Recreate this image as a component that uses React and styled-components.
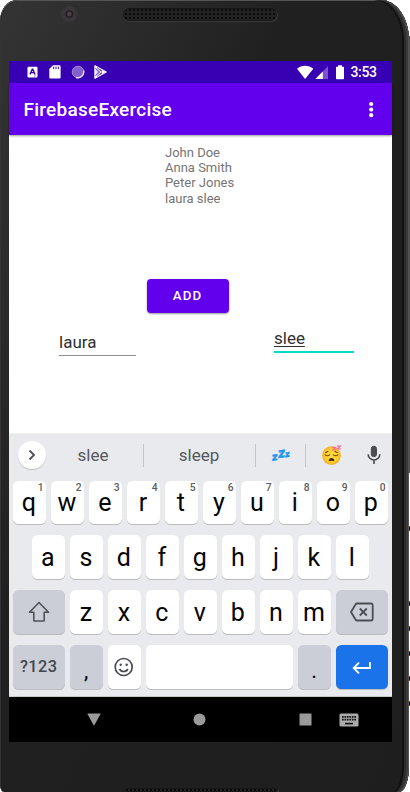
import React from "react";
import styled, { createGlobalStyle } from "styled-components";

const GlobalStyle = createGlobalStyle`
  * { box-sizing: border-box; }
  html, body { margin: 0; background: #fff; overflow: hidden; }
  svg { display: block; flex: none; }
`;

const Stage = styled.main`
  width: 410px;
  height: 792px;
  position: relative;
  overflow: hidden;
  background: #fff;
  font-family: Roboto, "Liberation Sans", sans-serif;
`;

const Phone = styled.div`
  width: 409px;
  height: 792px;
  padding: 0 17px 0 9px;
  display: flex;
  flex-direction: column;
  border-radius: 17px 28px 10px 4px / 21px 40px 26px 8px;
  background: linear-gradient(115deg, #343434 0%, #2b2b2b 18%, #202020 38%, #1e1e1e 100%);
  box-shadow: inset -1px 0 #555, inset -3px 0 #3a3a3a, inset -5px 0 #2c2c2c,
    inset -7px 0 #111, inset 0.5px 1px #555, inset 1px 1px #151515;
`;

const Bezel = styled.div`
  height: 61px;
  flex: none;
  display: flex;
  align-items: flex-start;
`;

const Camera = styled.div`
  width: 16px;
  height: 16px;
  margin: 6px 0 0 52px;
  border-radius: 50%;
  background: radial-gradient(circle at 52% 50%, #52434a 0 10%, #1f1b21 28%, #39363a 38%, #363536 100%);
`;

const Grille = styled.div`
  width: 154px;
  height: 13px;
  margin: 8px 0 0 46px;
  border-radius: 7px;
  background-color: #232323;
  background-image: radial-gradient(circle, #0b0b0b 0.8px, transparent 1.3px);
  background-size: 4px 4px;
  background-position: 1px 0;
  box-shadow: inset 0 0 0 1px #181818, 1px 1px 0 #393939;
`;

const BottomGrille = styled(Grille)`
  margin: 46px 0 0 115px;
`;

const Screen = styled.div`
  width: 383px;
  height: 681px;
  flex: none;
  display: flex;
  flex-direction: column;
  background: #fff;
`;

const StatusBar = styled.header`
  height: 22px;
  flex: none;
  display: flex;
  align-items: center;
  justify-content: space-between;
  padding: 0 15px 0 18px;
  background: #3700b3;
  color: #fff;
`;

const StatusGroup = styled.div`
  display: flex;
  align-items: center;
`;

const Clock = styled.span`
  width: 26.5px;
  font-size: 14px;
  line-height: 22px;
  font-weight: 500;
  letter-spacing: -0.35px;
  white-space: nowrap;
`;

const AppBar = styled.div`
  height: 52px;
  flex: none;
  display: flex;
  align-items: center;
  justify-content: space-between;
  padding: 1px 18px 0 14.5px;
  background: #6200ee;
  color: #fff;
  box-shadow: 0 1px 2px rgba(0, 0, 0, 0.4);
  z-index: 1;
`;

const Title = styled.h1`
  margin: 0;
  font-size: 19px;
  font-weight: 500;
  letter-spacing: 0.25px;
`;

const Content = styled.section`
  height: 298px;
  flex: none;
  display: flex;
  flex-direction: column;
`;

const Names = styled.ul`
  list-style: none;
  margin: 10px 0 0 156px;
  padding: 0;
  height: 133.5px;
  color: #757575;
  font-size: 13px;
  line-height: 15.2px;
`;

const AddButton = styled.button`
  width: 82px;
  height: 34px;
  margin: 0 0 0 137.5px;
  padding: 0;
  border: 0;
  border-radius: 4px;
  background: #6200ee;
  color: #fff;
  font: 500 13.3px Roboto, sans-serif;
  letter-spacing: 1.1px;
  box-shadow: 0 1px 2px rgba(0, 0, 0, 0.4);
`;

const Fields = styled.div`
  display: flex;
  justify-content: space-between;
  align-items: flex-start;
  padding: 0 38px 0 50px;
`;

const Field = styled.div`
  width: ${(p) => (p.$active ? "80px" : "77px")};
  height: ${(p) => (p.$active ? "24.5px" : "24px")};
  margin-top: ${(p) => (p.$active ? "15.5px" : "19.5px")};
  border-bottom: ${(p) => (p.$active ? "2px solid #03dac5" : "1px solid #8d8d8d")};
  color: #303030;
  font-size: 17px;
  line-height: ${(p) => (p.$active ? "20px" : "21px")};
  text-decoration: ${(p) => (p.$active ? "underline" : "none")};
  text-decoration-thickness: 1px;
  text-underline-offset: 2px;
`;

const Keyboard = styled.section`
  height: 264px;
  flex: none;
  background: #e8eaed;
  border-top: 1px solid #f1f1f1;
  border-bottom: 1px solid #c3cbc4;
`;

const Suggestions = styled.div`
  height: 46.5px;
  display: grid;
  grid-template-columns: 34.5px 100px 112px 50px 50px 36px;
  align-items: center;
  color: #55585c;
  font-size: 17px;
`;

const Suggestion = styled.div`
  height: 23px;
  margin-top: -4px;
  display: flex;
  align-items: center;
  justify-content: center;
  border-right: ${(p) => (p.$divider ? "1px solid #c4c6ca" : "0")};
`;

const ExpandButton = styled.button`
  width: 28px;
  height: 28px;
  margin: -5px 0 0 9px;
  padding: 0;
  border: 0;
  border-radius: 50%;
  display: grid;
  place-items: center;
  background: #fff;
  box-shadow: 0 1px 1px #bfc1c4;
`;

const SleepMark = styled.div`
  display: flex;
  align-items: center;
  gap: 0.5px;
  margin-left: 1px;
  color: #2196ed;
  font-weight: 900;
  font-style: italic;
`;

const Z = styled.span`
  font-size: ${(p) => p.$size}px;
  line-height: 12px;
  -webkit-text-stroke: 0.4px #2196ed;
  transform: translateY(${(p) => p.$shift}px) rotate(-8deg);
`;

const Rows = styled.div`
  display: flex;
  flex-direction: column;
  gap: 11.2px;
`;

const KeyRow = styled.div`
  height: 43.7px;
  display: flex;
  gap: 5px;
  padding-left: ${(p) => (p.$inset ? "22.7px" : "3.7px")};
`;

const keyColors = { plain: "#fff", soft: "#cbced6", enter: "#1a73e8" };

const Key = styled.button`
  position: relative;
  width: ${(p) => p.$w || 33}px;
  height: 43.5px;
  flex: none;
  padding: 0 0 ${(p) => (p.$icon ? 0 : 1)}px;
  border: 0;
  border-radius: 5.5px;
  display: flex;
  align-items: center;
  justify-content: center;
  background: ${(p) => keyColors[p.$tone || "plain"]};
  color: #050505;
  font-family: Roboto, sans-serif;
  font-size: 25px;
  line-height: 30px;
  box-shadow: 0 1px 0.5px #babcc0;
`;

const Glyph = styled.span`
  transform: translate(-0.3px, 0.6px);
`;

const Hint = styled.span`
  position: absolute;
  top: 1.5px;
  right: 2px;
  color: #5c5e62;
  font-size: 10.3px;
  font-weight: 500;
  line-height: 12px;
`;

const SymbolsLabel = styled.span`
  padding-top: 2px;
  color: #44474b;
  font-size: 16.3px;
  font-weight: 500;
  letter-spacing: 0.4px;
`;

const Punctuation = styled.span`
  padding-top: 9px;
  font-size: 22px;
`;

const NavBar = styled.nav`
  height: 45px;
  flex: none;
  display: flex;
  align-items: center;
  padding-left: 78px;
  background: #000;
  color: #9a9a9a;
`;

const NavItem = styled.div`
  margin-right: ${(p) => p.$gap || 0}px;
`;

const StatusItem = styled(NavItem)``;

const EdgeMark = styled.div`
  position: absolute;
  right: 0;
  top: ${(p) => p.$top}px;
  width: 1px;
  height: ${(p) => p.$h || 5}px;
  background: ${(p) => p.$color || "linear-gradient(#b66a20, #08001c 35% 70%, #b64c20)"};
`;

const AppNoticeIcon = () => (
  <svg width="11" height="12" viewBox="0 0 11 12">
    <rect x="0.5" y="0.7" width="10" height="10.7" rx="1" fill="#fff" />
    <path d="m3 8.4 2.3-5.2h.5l2.2 5.2M4 6.6h3.2" fill="none" stroke="#3700b3" strokeWidth="1.4" />
    <path d="M7 10h2" stroke="#9b83ce" />
  </svg>
);

const CardIcon = () => (
  <svg width="12" height="14" viewBox="0 0 12 14">
    <path d="M4 .3h6.3q1.3 0 1.300 1.400v10.500q0 1.300-1.300 1.300H1.500Q.3 13.500.3 12.200V4Z" fill="#fff" />
    <path d="M4.700 1.600v2.600M7 1.600v2.600M9.300 1.600v2.600" stroke="#3700b3" strokeWidth="1" />
  </svg>
);

const SyncIcon = () => (
  <svg width="14" height="14" viewBox="0 0 14 14">
    <circle cx="7" cy="7" r="6" fill="#8360cc" />
    <circle cx="7" cy="7" r="5.8" fill="none" stroke="#9d83d8" />
    <path d="M12.600 5.500A6 6 0 0 1 5 12.500" fill="none" stroke="#e6dff8" strokeWidth="1.400" />
  </svg>
);

const PlayIcon = () => (
  <svg width="13" height="14" viewBox="0 0 13 14">
    <path d="M.900.800 12.200 7 .900 13.200Z" fill="none" stroke="#fff" strokeWidth="1.200" strokeLinejoin="round" />
    <path d="m1 1 8 7.800M1 13l8-7.800" fill="none" stroke="#fff" strokeWidth="1.300" />
    <path d="m1 1 4.600 5.900L1 13Z" fill="#fff" opacity=".850" />
    <path d="m1.400 3.200 3.400 3.800-3.400 3.800M3 2.700l7.200 5.700M3 11.300l7.200-5.700" fill="none" stroke="#3700b3" strokeWidth=".6" />
    <path d="m9.200 5.300 3 1.700-3 1.700L7.600 7Z" fill="#fff" />
  </svg>
);

const StatusIcons = () => (
  <svg width="54" height="15" viewBox="0 0 54 15">
    <path d="M0 3.700C4.400-.3 11.900-.3 16.300 3.700L8.100 13.900Z" fill="#fff" />
    <path d="M18.300 14 31 1.200V14Z" fill="#7954ca" />
    <path d="M18.300 14 25.800 6.500V14Z" fill="#fff" />
    <path d="M41.100.2h3.800v1.500h1.500q.6 0 .6.7v11q0 .8-.8.8h-6.400q-.8 0-.8-.8v-11q0-.7.7-.7h1.400Z" fill="#fff" />
  </svg>
);

const MoreIcon = () => (
  <svg width="6" height="18" viewBox="0 0 6 18" fill="#fff">
    <circle cx="3.2" cy="3" r="2.100" /><circle cx="3.2" cy="8.600" r="2.100" /><circle cx="3.2" cy="14.200" r="2.100" />
  </svg>
);

const SleepyFace = () => (
  <svg width="22" height="22" viewBox="0 0 22 22">
    <defs>
      <radialGradient id="skin"><stop stopColor="#ffdf45" /><stop offset=".75" stopColor="#ffcc2c" /><stop offset="1" stopColor="#f2a620" /></radialGradient>
    </defs>
    <circle cx="11.5" cy="11.600" r="9.300" fill="url(#skin)" />
    <path d="M5.100 10.800q2.300 2 4.600 0M13.300 10.800q2.300 2 4.600 0M5.600 8.400l2.300-.9M15 7.500l2.300.9" fill="none" stroke="#644017" strokeWidth="1.100" strokeLinecap="round" />
    <path d="M8.800 17.300Q8.600 14 11.500 14t2.700 3.300q-2.700-1.200-5.400 0Z" fill="#402818" />
    <path d="M12.500 3.400h3l-2.500 2.500h3M17 2.200h3.400l-2.900 2.700h3.300" fill="none" stroke="#f768a8" strokeWidth="1.200" />
  </svg>
);

const MicIcon = () => (
  <svg width="14" height="20" viewBox="0 0 14 20" fill="none" stroke="#4a4c50">
    <rect x="4.300" y="1.200" width="5.200" height="10.500" rx="2.600" fill="#4a4c50" />
    <path d="M1.200 9.200a5.800 5.800 0 0 0 11.600 0M7 15v4" strokeWidth="1.600" />
  </svg>
);

const ShiftIcon = () => (
  <svg width="22" height="22" viewBox="0 0 22 22" fill="none" stroke="#505257" strokeWidth="1.600" strokeLinejoin="round">
    <path d="M11 1.500 1.500 11.300h4.300v8q0 .7.7.7h9q.7 0 .7-.7v-8h4.300Z" />
  </svg>
);

const BackspaceIcon = () => (
  <svg width="24" height="20" viewBox="0 0 24 20" fill="none" stroke="#4b4e53" strokeWidth="1.800" strokeLinejoin="round">
    <path d="M7 1.500h14q1.700 0 1.700 1.700v13.600q0 1.700-1.700 1.700H7Q6 18.500 5.500 17.500L1 10 5.500 2.500Q6 1.500 7 1.500Z" />
    <path d="m9.800 6.500 7 7m0-7-7 7" />
  </svg>
);

const SmileIcon = () => (
  <svg width="20" height="20" viewBox="0 0 20 20" fill="none" stroke="#4b4d51" strokeWidth="1.700">
    <circle cx="9.700" cy="10" r="8.500" />
    <path d="M5.500 12q1.300 2.500 4.200 2.500t4.200-2.500" />
    <circle cx="6.700" cy="7.800" r="1.200" fill="#4b4d51" stroke="none" /><circle cx="12.700" cy="7.800" r="1.200" fill="#4b4d51" stroke="none" />
  </svg>
);

const EnterIcon = () => (
  <svg width="20" height="14" viewBox="0 0 20 14" fill="none" stroke="#fff" strokeWidth="1.800">
    <path d="M18 2v6H2M7 2.700 1.700 8 7 13.300" />
  </svg>
);

const KeyboardIcon = () => (
  <svg width="20" height="14" viewBox="0 0 20 14">
    <rect x=".5" y=".5" width="19" height="13" rx="1.500" fill="#aaa" />
    <path d="M3 3.800h14M3 6.700h14" stroke="#111" strokeWidth="1.700" strokeDasharray="1.700 .76" />
    <path d="M6 10.600h8" stroke="#111" strokeWidth="1.600" />
  </svg>
);

const LetterKeys = ({ letters, hints }) =>
  [...letters].map((letter, i) => (
    <Key key={letter}><Glyph>{letter}</Glyph>{hints && <Hint>{hints[i]}</Hint>}</Key>
  ));

export default function App() {
  return (
    <Stage>
      <GlobalStyle />
      <Phone>
        <Bezel><Camera /><Grille /></Bezel>
        <Screen>
          <StatusBar>
            <StatusGroup>
              <StatusItem $gap={11}><AppNoticeIcon /></StatusItem>
              <StatusItem $gap={9.500}><CardIcon /></StatusItem>
              <StatusItem $gap={9}><SyncIcon /></StatusItem>
              <PlayIcon />
            </StatusGroup>
            <StatusGroup>
              <StatusIcons />
              <Clock>3:53</Clock>
            </StatusGroup>
          </StatusBar>
          <AppBar><Title>FirebaseExercise</Title><MoreIcon /></AppBar>
          <Content>
            <Names><li>John Doe</li><li>Anna Smith</li><li>Peter Jones</li><li>laura slee</li></Names>
            <AddButton>ADD</AddButton>
            <Fields><Field>laura</Field><Field $active>slee</Field></Fields>
          </Content>
          <Keyboard>
            <Suggestions>
              <ExpandButton>
                <svg width="8" height="12" viewBox="0 0 8 12" fill="none" stroke="#4d4f53" strokeWidth="1.800"><path d="m1.500 1.500 4.500 4.500-4.500 4.500" /></svg>
              </ExpandButton>
              <Suggestion $divider>slee</Suggestion>
              <Suggestion $divider>sleep</Suggestion>
              <Suggestion $divider>
                <SleepMark><Z $size={11} $shift={2.500}>z</Z><Z $size={14} $shift={-2.500}>z</Z><Z $size={9} $shift={-1}>z</Z></SleepMark>
              </Suggestion>
              <Suggestion><SleepyFace /></Suggestion>
              <Suggestion><MicIcon /></Suggestion>
            </Suggestions>
            <Rows>
              <KeyRow><LetterKeys letters="qwertyuiop" hints="1234567890" /></KeyRow>
              <KeyRow $inset><LetterKeys letters="asdfghjkl" /></KeyRow>
              <KeyRow>
                <Key $w={52} $tone="soft" $icon><ShiftIcon /></Key>
                <LetterKeys letters="zxcvbnm" />
                <Key $w={52} $tone="soft" $icon><BackspaceIcon /></Key>
              </KeyRow>
              <KeyRow>
                <Key $w={52} $tone="soft"><SymbolsLabel>?123</SymbolsLabel></Key>
                <Key $tone="soft"><Punctuation>,</Punctuation></Key>
                <Key $icon><SmileIcon /></Key>
                <Key $w={147} aria-label="Space" />
                <Key $tone="soft"><Punctuation>.</Punctuation></Key>
                <Key $w={52} $tone="enter" $icon><EnterIcon /></Key>
              </KeyRow>
            </Rows>
          </Keyboard>
          <NavBar>
            <NavItem $gap={92}>
              <svg width="14" height="13" viewBox="0 0 14 13"><path d="M1 .5h12q.8 0 .4.800L7.500 12q-.5.800-1 0L.6 1.300Q.2.500 1 .5Z" fill="currentColor" /></svg>
            </NavItem>
            <NavItem $gap={93}><svg width="13" height="13"><circle cx="6.500" cy="6.500" r="6" fill="currentColor" /></svg></NavItem>
            <NavItem $gap={27}><svg width="13" height="13"><rect x=".5" y=".5" width="12" height="12" rx=".5" fill="currentColor" /></svg></NavItem>
            <NavItem><KeyboardIcon /></NavItem>
          </NavBar>
        </Screen>
        <BottomGrille />
      </Phone>
      <EdgeMark $top={36} $h={437} $color="#4a4a4a" />
      {[526, 601, 626, 651, 676, 701].map((top) => <EdgeMark key={top} $top={top} />)}
    </Stage>
  );
}
